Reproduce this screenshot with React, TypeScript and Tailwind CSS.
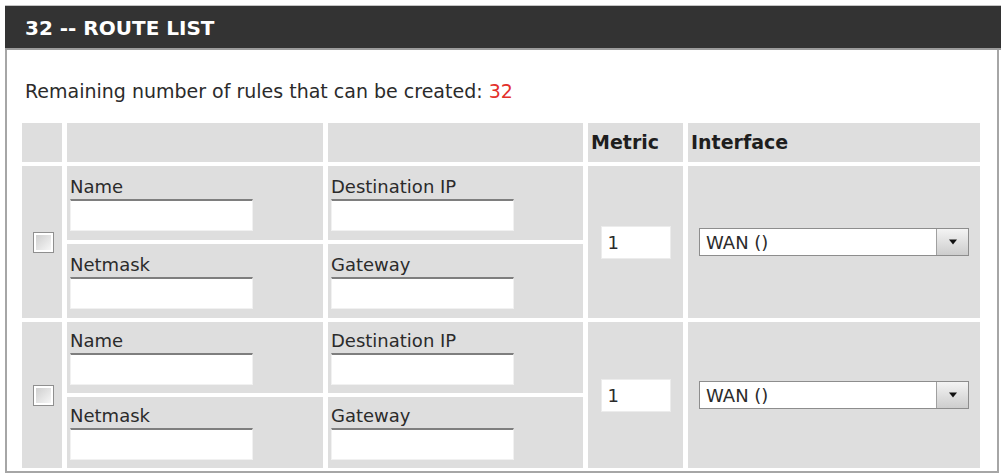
const font = { fontFamily: '"DejaVu Sans", Verdana, sans-serif' };

function TextBox({ w }: { w: string }) {
  return (
    <div
      className={`${w} h-[32px] bg-white border border-[#f1f1f1] border-t-2 border-t-[#7e7e7e]`}
    />
  );
}

function Field({ label }: { label: string }) {
  return (
    <div className="bg-[#dedede] flex flex-col justify-center pl-[3px]">
      <div className="text-[18px] leading-[21px] text-[#2b2b2b] mb-[2px]">{label}</div>
      <TextBox w="w-[183px]" />
    </div>
  );
}

function Checkbox() {
  return (
    <div className="row-span-2 bg-[#dedede] flex items-center justify-center">
      <div className="w-[21px] h-[21px] border border-[#8f8f8f] p-[2px] bg-white ml-[2px]">
        <div className="w-full h-full bg-gradient-to-br from-[#cfcfcf] to-[#f6f6f6]" />
      </div>
    </div>
  );
}

function Metric() {
  return (
    <div className="row-span-2 bg-[#dedede] flex items-center justify-center">
      <div className="w-[70px] h-[33px] bg-white border border-[#ececec] flex items-center pl-[6px] text-[18px] text-[#2b2b2b]">
        1
      </div>
    </div>
  );
}

function InterfaceSelect() {
  return (
    <div className="row-span-2 bg-[#dedede] flex items-center justify-center">
      <div className="w-[270px] h-[28px] bg-white border border-[#8d8d8d] flex items-stretch">
        <div className="flex-1 flex items-center pl-[6px] text-[18px] text-[#2b2b2b]">WAN ()</div>
        <div className="w-[32px] border-l border-[#a0a0a0] bg-gradient-to-b from-[#f4f4f4] to-[#cdcdcd] flex items-center justify-center">
          <svg width="10" height="6" viewBox="0 0 10 6">
            <path d="M1 0.5h8L5 5.5z" fill="#111" />
          </svg>
        </div>
      </div>
    </div>
  );
}

function RouteRow() {
  return (
    <>
      <Checkbox />
      <Field label="Name" />
      <Field label="Destination IP" />
      <Metric />
      <InterfaceSelect />
      <Field label="Netmask" />
      <Field label="Gateway" />
    </>
  );
}

export default function App() {
  return (
    <div className="w-[1001px] h-[476px] bg-white overflow-hidden pt-[5px] pl-[5px]" style={font}>
      <div className="w-[996px] h-[45px] bg-[#333333] border-t border-[#c4c4c4] border-b-2 border-b-[#9c9c9c] flex items-center pl-[20px] pt-[2px]">
        <span className="text-white font-bold text-[20px] leading-none">32 -- ROUTE LIST</span>
      </div>

      <div className="w-[994px] border-l-2 border-r-2 border-b-2 border-[#a6a6a6] pl-[15px] pt-[30px] pb-[3px]">
        <div className="ml-[3px] text-[19px] leading-[22px] text-[#2b2b2b] mb-[21px]">
          Remaining number of rules that can be created: <span className="text-[#e3302b]">32</span>
        </div>

        <div className="grid grid-cols-[40px_256px_255px_95px_292px] grid-rows-[39px_74px_74px_71px_71px] gap-x-[5px] gap-y-[4px]">
          <div className="bg-[#dedede]" />
          <div className="bg-[#dedede]" />
          <div className="bg-[#dedede]" />
          <div className="bg-[#dedede] flex items-center pl-[3px] font-bold text-[19px] text-[#1e1e1e]">Metric</div>
          <div className="bg-[#dedede] flex items-center pl-[3px] font-bold text-[19px] text-[#1e1e1e]">Interface</div>
          <RouteRow />
          <RouteRow />
        </div>
      </div>
    </div>
  );
}
